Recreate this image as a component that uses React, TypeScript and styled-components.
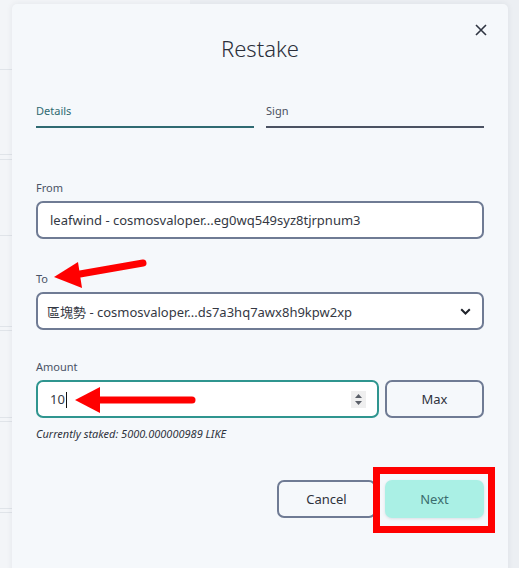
import React from 'react';
import styled, { createGlobalStyle } from 'styled-components';

const GlobalStyle = createGlobalStyle`
  html, body {
    margin: 0;
    padding: 0;
    background: #eceff3;
  }
  body {
    font-family: "Noto Sans", "Noto Sans CJK TC", sans-serif;
    color: #2b2f3a;
  }
`;

const Page = styled.div`
  position: relative;
  width: 519px;
  height: 568px;
  overflow: hidden;
  background: #eceff3;
`;

// page content behind the dialog, mostly hidden
const BackTable = styled.div`
  display: flex;
  flex-direction: column;
  width: 190px;
`;

const BackRow = styled.div<{ $h: number }>`
  height: ${p => p.$h}px;
  border-bottom: 1px solid #e0e4e9;
  background: #f3f5f8;
`;

const Modal = styled.div`
  position: absolute;
  top: 4px;
  left: 12px;
  width: 496px;
  height: 600px;
  box-sizing: border-box;
  padding: 0 24px;

  display: flex;
  flex-direction: column;

  background: #f5f8fb;
  border-radius: 5px;
  box-shadow: 0 0 6px rgba(40, 50, 70, 0.08);
`;

const Header = styled.div`
  position: relative;
  padding-top: 30px;
  display: flex;
  justify-content: center;
`;

const Title = styled.h2`
  margin: 0;
  font-size: 22px;
  line-height: 28px;
  font-weight: 300;
  color: #2b2f3a;
`;

const CloseButton = styled.button`
  position: absolute;
  top: 16px;
  right: -7px;
  width: 20px;
  height: 20px;
  padding: 0;
  border: none;
  background: none;
  display: flex;
  align-items: center;
  justify-content: center;
  color: #2f3542;
`;

const Tabs = styled.div`
  margin-top: 41px;
  display: grid;
  grid-template-columns: 1fr 1fr;
  gap: 12px;
`;

const Tab = styled.div<{ $active?: boolean }>`
  padding-bottom: 8px;
  font-size: 11px;
  line-height: 15px;
  color: ${p => (p.$active ? '#2f6a72' : '#4a5060')};
  border-bottom: 2px solid ${p => (p.$active ? '#2f6a72' : '#4b5262')};
`;

const Field = styled.div<{ $mt: number }>`
  margin-top: ${p => p.$mt}px;
  display: flex;
  flex-direction: column;
`;

const Label = styled.label`
  font-size: 11px;
  line-height: 15px;
  color: #4a5366;
  margin-bottom: 6px;
`;

const Box = styled.div<{ $focus?: boolean }>`
  height: 38px;
  box-sizing: border-box;
  display: flex;
  align-items: center;
  border: 2px solid ${p => (p.$focus ? '#2f958f' : '#6f7b94')};
  border-radius: 7px;
  background: #fff;
  font-size: 13px;
  color: #343843;
`;

const BoxText = styled.span<{ $pl: number }>`
  padding-left: ${p => p.$pl}px;
  flex: 1;
  white-space: nowrap;
  overflow: hidden;
`;

const Chevron = styled.span`
  width: 14px;
  margin-right: 8px;
  display: flex;
  align-items: center;
`;

const AmountRow = styled.div`
  display: flex;
  gap: 6px;
`;

const AmountBox = styled(Box)`
  flex: 1;
`;

const Caret = styled.span`
  display: inline-block;
  width: 1px;
  height: 16px;
  margin-left: 1px;
  vertical-align: middle;
  background: #111;
`;

const Spinner = styled.span`
  width: 15px;
  height: 17px;
  margin-right: 11px;
  background: #efefef;
  display: flex;
  align-items: center;
  justify-content: center;
`;

const Button = styled.button<{ $primary?: boolean }>`
  height: 38px;
  box-sizing: border-box;
  font-family: inherit;
  font-size: 13px;
  border-radius: 7px;
  cursor: pointer;
  color: ${p => (p.$primary ? '#3b6d6e' : '#2e323c')};
  background: ${p => (p.$primary ? '#aaf0e5' : '#f5f8fb')};
  border: ${p => (p.$primary ? 'none' : '2px solid #6f7b94')};
  box-shadow: ${p => (p.$primary ? '0 1px 3px rgba(60, 80, 100, 0.15)' : 'none')};
`;

const MaxButton = styled(Button)`
  width: 99px;
`;

const Hint = styled.div`
  margin-top: 9px;
  font-size: 11px;
  line-height: 14px;
  font-style: italic;
  color: #2e323c;
`;

const Footer = styled.div`
  margin-top: 39px;
  display: flex;
  justify-content: flex-end;
  gap: 9px;
`;

const FooterButton = styled(Button)`
  width: 99px;
`;

// screenshot annotations drawn on top
const Marks = styled.svg`
  position: absolute;
  top: 0;
  left: 0;
  pointer-events: none;
`;

const RedFrame = styled.div`
  position: absolute;
  left: 373px;
  top: 467px;
  width: 122px;
  height: 66px;
  box-sizing: border-box;
  border: 7px solid #ff0000;
  pointer-events: none;
`;

export default function App() {
  const rows = [69, 84, 4, 75, 90, 3, 86, 3, 86, 3, 80];
  return (
    <>
      <GlobalStyle />
      <Page>
        <BackTable>
          {rows.map((h, i) => (
            <BackRow key={i} $h={h} />
          ))}
        </BackTable>

        <Modal>
          <Header>
            <Title>Restake</Title>
            <CloseButton aria-label="close">
              <svg width="12" height="12" viewBox="0 0 12 12">
                <path d="M1 1 L11 11 M11 1 L1 11" stroke="currentColor" strokeWidth="1.6" />
              </svg>
            </CloseButton>
          </Header>

          <Tabs>
            <Tab $active>Details</Tab>
            <Tab>Sign</Tab>
          </Tabs>

          <Field $mt={52}>
            <Label>From</Label>
            <Box>
              <BoxText $pl={12}>leafwind - cosmosvaloper...eg0wq549syz8tjrpnum3</BoxText>
            </Box>
          </Field>

          <Field $mt={32}>
            <Label>To</Label>
            <Box>
              <BoxText $pl={9}>區塊勢 - cosmosvaloper...ds7a3hq7awx8h9kpw2xp</BoxText>
              <Chevron>
                <svg width="11" height="7" viewBox="0 0 11 7">
                  <path d="M1.2 1.2 L5.5 5.5 L9.8 1.2" fill="none" stroke="#1f232b" strokeWidth="2" />
                </svg>
              </Chevron>
            </Box>
          </Field>

          <Field $mt={29}>
            <Label>Amount</Label>
            <AmountRow>
              <AmountBox $focus>
                <BoxText $pl={12}>
                  10<Caret />
                </BoxText>
                <Spinner>
                  <svg width="9" height="13" viewBox="0 0 9 13">
                    <path d="M4.5 1 L8 5 L1 5 Z M1 8 L8 8 L4.5 12 Z" fill="#5a5f68" />
                  </svg>
                </Spinner>
              </AmountBox>
              <MaxButton>Max</MaxButton>
            </AmountRow>
            <Hint>Currently staked: 5000.000000989 LIKE</Hint>
          </Field>

          <Footer>
            <FooterButton>Cancel</FooterButton>
            <FooterButton $primary>Next</FooterButton>
          </Footer>
        </Modal>

        <Marks width="519" height="568" viewBox="0 0 519 568">
          <path d="M143 263 L80 274" stroke="#ff0000" strokeWidth="7" strokeLinecap="round" />
          <path d="M54 277 L78 262 L82 288 Z" fill="#ff0000" />
          <path d="M192 400 L98 400" stroke="#ff0000" strokeWidth="7" strokeLinecap="round" />
          <path d="M75 400 L100 387 L100 413 Z" fill="#ff0000" />
        </Marks>
        <RedFrame />
      </Page>
    </>
  );
}
